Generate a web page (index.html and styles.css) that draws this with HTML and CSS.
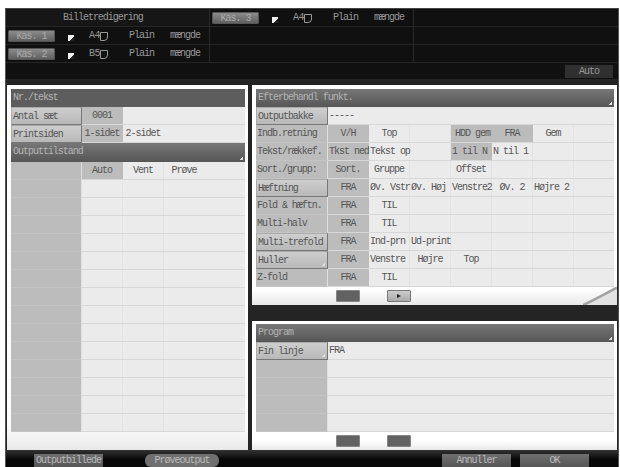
FILE: index.html
```html
<!DOCTYPE html>
<html lang="da">
<head>
<meta charset="utf-8">
<title>Billetredigering</title>
<link rel="stylesheet" href="styles.css">
</head>
<body>
<div class="screen">
  <header class="top">
    <div class="trays">
      <div class="tray-col">
        <div class="tray title">Billetredigering</div>
        <div class="tray"><span class="kas">Kas. 1</span><i class="flag"></i><span class="size">A4<i class="sheet"></i></span><span class="kind">Plain</span><span class="amount">mængde</span></div>
        <div class="tray"><span class="kas">Kas. 2</span><i class="flag"></i><span class="size">B5<i class="sheet"></i></span><span class="kind">Plain</span><span class="amount">mængde</span></div>
      </div>
      <div class="tray-col">
        <div class="tray"><span class="kas">Kas. 3</span><i class="flag"></i><span class="size">A4<i class="sheet"></i></span><span class="kind">Plain</span><span class="amount">mængde</span></div>
        <div class="tray"></div>
        <div class="tray"></div>
      </div>
      <div class="tray-col">
        <div class="tray"></div>
        <div class="tray"></div>
        <div class="tray"></div>
      </div>
    </div>
    <div class="mode"><span class="auto">Auto</span></div>
  </header>

  <main class="body">
    <section class="panel left">
      <div class="head flat">Nr./tekst</div>
      <div class="row plain"><b class="key btn">Antal sæt</b><span class="on">0001</span></div>
      <div class="row plain"><b class="key btn">Printsiden</b><span class="on">1-sidet</span><span>2-sidet</span></div>
      <div class="head tall corner">Outputtilstand</div>
      <div class="row"><b class="key"></b><span class="on">Auto</span><span>Vent</span><span class="last">Prøve</span></div>
      <div class="row"><b class="key"></b><span></span><span></span></div>
      <div class="row"><b class="key"></b><span></span><span></span></div>
      <div class="row"><b class="key"></b><span></span><span></span></div>
      <div class="row"><b class="key"></b><span></span><span></span></div>
      <div class="row"><b class="key"></b><span></span><span></span></div>
      <div class="row"><b class="key"></b><span></span><span></span></div>
      <div class="row"><b class="key"></b><span></span><span></span></div>
      <div class="row"><b class="key"></b><span></span><span></span></div>
      <div class="row"><b class="key"></b><span></span><span></span></div>
      <div class="row"><b class="key"></b><span></span><span></span></div>
      <div class="row"><b class="key"></b><span></span><span></span></div>
      <div class="row"><b class="key"></b><span></span><span></span></div>
      <div class="row"><b class="key"></b><span></span><span></span></div>
      <div class="row"><b class="key"></b><span></span><span></span></div>
    </section>

    <div class="right">
      <section class="panel finish">
        <div class="head corner">Efterbehandl funkt.</div>
        <div class="row plain"><b class="key btn">Outputbakke</b><span class="l">-----</span></div>
        <div class="row"><b class="key">Indb.retning</b><span class="on">V/H</span><span>Top</span><span></span><span class="on l wide">HDD gem</span><span class="on">FRA</span><span>Gem</span></div>
        <div class="row"><b class="key">Tekst/rækkef.</b><span class="on l">Tkst ned</span><span class="l">Tekst op</span><span></span><span class="on l">1 til N</span><span class="l">N til 1</span><span></span></div>
        <div class="row"><b class="key">Sort./grupp:</b><span class="on">Sort.</span><span>Gruppe</span><span></span><span>Offset</span><span></span><span></span></div>
        <div class="row"><b class="key btn">Hæftning</b><span class="on">FRA</span><span class="l">Øv. Vstr</span><span class="l">Øv. Høj</span><span class="l">Venstre2</span><span>Øv. 2</span><span class="l">Højre 2</span></div>
        <div class="row"><b class="key">Fold &amp; hæftn.</b><span class="on">FRA</span><span>TIL</span><span></span><span></span><span></span><span></span></div>
        <div class="row"><b class="key">Multi-halv</b><span class="on">FRA</span><span>TIL</span><span></span><span></span><span></span><span></span></div>
        <div class="row"><b class="key btn">Multi-trefold</b><span class="on">FRA</span><span class="l">Ind-prn</span><span class="l">Ud-print</span><span></span><span></span><span></span></div>
        <div class="row"><b class="key btn corner">Huller</b><span class="on">FRA</span><span class="l">Venstre</span><span>Højre</span><span>Top</span><span></span><span></span></div>
        <div class="row"><b class="key">Z-fold</b><span class="on">FRA</span><span>TIL</span><span></span><span></span><span></span><span></span></div>
        <div class="pager"><i class="page"></i><i class="page next"></i></div>
        <svg class="fold" width="34" height="18" viewBox="0 0 34 18"><path d="M3 18 34 1V18Z" fill="#e2e2e2"/><path d="M0 18C8 15 18 9 34 0.500" fill="none" stroke="#a2a2a2" stroke-width="2.500"/></svg>
      </section>

      <section class="panel program">
        <div class="head corner">Program</div>
        <div class="row plain"><b class="key btn corner">Fin linje</b><span class="l">FRA</span></div>
        <div class="row plain"><b class="key"></b></div>
        <div class="row plain"><b class="key"></b></div>
        <div class="row plain"><b class="key"></b></div>
        <div class="row plain"><b class="key"></b></div>
        <div class="pager"><i class="page"></i><i class="page"></i></div>
      </section>
    </div>
  </main>

  <footer class="foot">
    <span class="action image">Outputbillede</span>
    <span class="action proof">Prøveoutput</span>
    <span class="action cancel">Annuller</span>
    <span class="action ok">OK</span>
  </footer>
</div>
</body>
</html>
```

FILE: styles.css
```css
* { box-sizing: border-box; }
body {
  margin: 0;
  padding: 8px 1px 0 5px;
  height: 467px;
  overflow: hidden;
  background: #fff;
  font: 10px/18px "Liberation Mono", monospace;
  letter-spacing: -1.02px;
  white-space: nowrap;
  color: #555;
}
.screen {
  height: 459px;
  display: flex;
  flex-direction: column;
  background: #242424;
  border-left: 1px solid #555;
  border-right: 1px solid #555;
}

/* Paper trays */
.top {
  height: 76px;
  background: #101010;
  border-top: 1px solid #444;
  border-bottom: 5px solid #242424;
  color: #999;
}
.trays { display: flex; height: 54px; }
.tray-col { width: 204px; border-right: 1px solid #292929; }
.tray-col:last-child { flex: 1; border-right: 0; }
.tray {
  height: 18px;
  display: flex;
  align-items: center;
  padding: 1px 0 0 2px;
  border-bottom: 1px solid #252525;
}
.title { padding-left: 57px; background: #161616; }
.kas {
  width: 47px;
  height: 12px;
  line-height: 11px;
  text-align: center;
  color: #aaa;
  background: linear-gradient(#8b8b8b, #606060);
  border: 1px solid #555;
  border-radius: 1px;
}
.flag {
  width: 6px;
  height: 6px;
  margin: 4px 15px 0 13px;
  background: linear-gradient(135deg, #eee 60%, #222 62%);
}
.size { width: 40px; display: flex; align-items: center; letter-spacing: -0.5px; }
.sheet {
  width: 8px;
  height: 9px;
  border: 1px solid #999;
  border-bottom-right-radius: 4px;
}
.kind { width: 41px; letter-spacing: -1px; }
.mode { display: flex; justify-content: flex-end; padding: 2px 5px 0 0; }
.auto {
  width: 48px;
  height: 13px;
  line-height: 13px;
  text-align: center;
  background: #303030;
}

/* Panels */
.body { display: flex; gap: 4px; padding: 1px 1px 0; height: 366px; }
.panel {
  position: relative;
  padding: 4px 3px 0 4px;
  background: linear-gradient(#fff 93%, #e8e8e8);
}
.left { width: 241px; height: 365px; }
.right { flex: 1; display: flex; flex-direction: column; gap: 16px; }
.finish { height: 220px; }
.program { height: 129px; padding-top: 3px; }
.head {
  position: relative;
  height: 18px;
  padding-left: 2px;
  color: #b4b4b4;
  background: linear-gradient(#777, #565656);
}
.flat { background: #5d5d5d; }
.tall { height: 19px; }
.corner::after {
  content: "";
  position: absolute;
  right: 2px;
  bottom: 2px;
  width: 3px;
  height: 3px;
  background: linear-gradient(135deg, transparent 45%, #ddd 50%);
}
.row {
  height: 18px;
  display: flex;
  background: #ebebeb;
  border-bottom: 1px solid #d8d8d8;
}
.row > span {
  width: 41px;
  text-align: center;
  border-right: 1px solid #e3e3e3;
}
.plain > span, .row > .last { border-right-color: transparent; }
.row > .l { text-align: left; padding-left: 1px; }
.row > .wide { padding-left: 4px; }
.row > .on { background: #bcbcbc; border-right-color: #bcbcbc; }
.key {
  position: relative;
  width: 72px;
  height: 18px;
  padding-left: 1px;
  font-weight: 400;
  background: #bcbcbc;
  border-right: 1px solid #e0e0e0;
  border-bottom: 1px solid #c3c3c3;
}
.left .key { width: 71px; }
.btn {
  line-height: 17px;
  padding-left: 1px;
  background: linear-gradient(#cecece, #b8b8b8);
  border: 1px solid #777;
  border-top-color: #aaa;
  border-left-color: #aaa;
}
.pager { display: flex; gap: 27px; padding: 3px 0 0 80px; }
.page {
  width: 24px;
  height: 12px;
  background: #626262;
  border: 1px solid #858585;
  border-radius: 1px;
}
.next {
  display: flex;
  align-items: center;
  justify-content: center;
  background: linear-gradient(#ccc, #aaa);
  border-color: #777;
}
.next::after {
  content: "";
  border: 2px solid transparent;
  border-left: 4px solid #222;
  border-right: 0;
}
.fold { position: absolute; right: 0; bottom: 0; }

/* Footer actions */
.foot {
  flex: 1;
  display: flex;
  align-items: flex-end;
  background: linear-gradient(#333, #080808 55%);
}
.action {
  height: 13px;
  line-height: 14px;
  text-align: center;
  color: #bbb;
  background: linear-gradient(#707070, #565656);
}
.image { width: 69px; margin-left: 28px; }
.proof { width: 74px; margin-left: 42px; border-radius: 6px; background: #707070; }
.cancel { width: 69px; margin-left: 223px; }
.ok { width: 69px; margin-left: 9px; }
```
